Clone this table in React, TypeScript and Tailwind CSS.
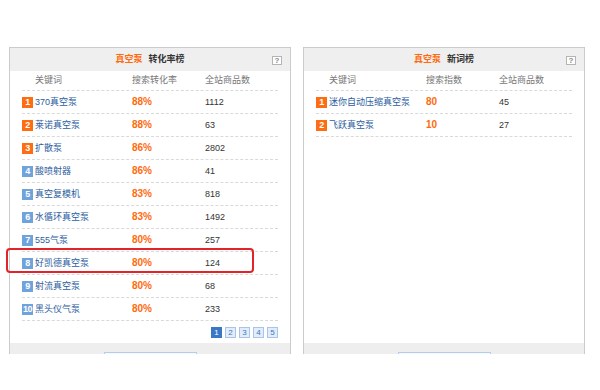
const font = { fontFamily: '"Liberation Sans", "Noto Sans CJK SC", sans-serif' };

type Row = { word: string; value: string; count: string };

const conversion: Row[] = [
  { word: '370真空泵', value: '88%', count: '1112' },
  { word: '莱诺真空泵', value: '88%', count: '63' },
  { word: '扩散泵', value: '86%', count: '2802' },
  { word: '酸喷射器', value: '86%', count: '41' },
  { word: '真空复模机', value: '83%', count: '818' },
  { word: '水循环真空泵', value: '83%', count: '1492' },
  { word: '555气泵', value: '80%', count: '257' },
  { word: '好凯德真空泵', value: '80%', count: '124' },
  { word: '射流真空泵', value: '80%', count: '68' },
  { word: '黑头仪气泵', value: '80%', count: '233' },
];

const fresh: Row[] = [
  { word: '迷你自动压缩真空泵', value: '80', count: '45' },
  { word: '飞跃真空泵', value: '10', count: '27' },
];

const HelpIcon = () => (
  <span className="flex h-[9px] w-[10px] items-center justify-center border border-[#b5b5b5] bg-white text-[8px] leading-none text-[#888]">
    ?
  </span>
);

const RankList = ({ rows }: { rows: Row[] }) => (
  <div>
    {rows.map((r, i) => (
      <div
        key={r.word}
        className="grid h-[23px] grid-cols-[110px_73px_1fr] items-center border-b border-dashed border-[#d9d9d9] leading-[12px]"
      >
        <div className="flex items-center">
          <span
            className={`mr-[2px] flex h-[11px] w-[11px] items-center justify-center text-[9px] font-bold leading-none tracking-[-0.5px] text-white ${
              i < 3 ? 'bg-[#ff6d12]' : 'bg-[#6fa3dc]'
            }`}
          >
            {i + 1}
          </span>
          <span className="text-[9px] text-[#2c5d9e]">{r.word}</span>
        </div>
        <span className="text-[10px] font-bold text-[#ff6a0e]">{r.value}</span>
        <span className="text-[9px] text-[#333]">{r.count}</span>
      </div>
    ))}
  </div>
);

const Panel = ({
  title,
  col2,
  rows,
  pager,
  highlight,
}: {
  title: string;
  col2: string;
  rows: Row[];
  pager?: boolean;
  highlight?: boolean;
}) => (
  <div className="relative w-[282px] shrink-0 border border-[#cbcbcb] bg-white">
    <div className="relative flex h-[23px] items-center justify-center gap-[6px] bg-[#efefef] text-[9px] font-bold">
      <span className="text-[#ff6a0e]">真空泵</span>
      <span className="text-[#333]">{title}</span>
      <div className="absolute right-[8px] top-[8px]">
        <HelpIcon />
      </div>
    </div>
    <div className="h-[272px] px-[12px]">
      <div className="grid h-[20px] grid-cols-[110px_73px_1fr] items-center border-b border-dashed border-[#d9d9d9] text-[9px] text-[#777]">
        <span className="pl-[13px]">关键词</span>
        <span>{col2}</span>
        <span>全站商品数</span>
      </div>
      <RankList rows={rows} />
      {pager && (
        <div className="flex justify-end gap-[3px] pt-[6px]">
          {[1, 2, 3, 4, 5].map((n) => (
            <span
              key={n}
              className={`flex h-[11px] w-[11px] items-center justify-center border text-[8px] leading-none ${
                n === 1
                  ? 'border-[#3a78c6] bg-[#3a78c6] text-white'
                  : 'border-[#a8c5e8] bg-[#e2edf9] text-[#3a78c6]'
              }`}
            >
              {n}
            </span>
          ))}
        </div>
      )}
    </div>
    <div className="h-[40px] bg-[#eeeeee] pt-[9px]">
      <div className="mx-auto h-[22px] w-[93px] border border-[#b3cdea] bg-[#f5f9fd]" />
    </div>
    {highlight && (
      <div className="absolute left-[-4px] top-[200px] h-[25px] w-[248px] rounded-[4px] border-2 border-[#e3232a]" />
    )}
  </div>
);

export default function App() {
  return (
    <div className="h-[390px] w-[600px] bg-white" style={font}>
      <div className="flex h-[354px] gap-[12px] overflow-hidden pl-[9px] pt-[47px]">
        <Panel title="转化率榜" col2="搜索转化率" rows={conversion} pager highlight />
        <Panel title="新词榜" col2="搜索指数" rows={fresh} />
      </div>
    </div>
  );
}
